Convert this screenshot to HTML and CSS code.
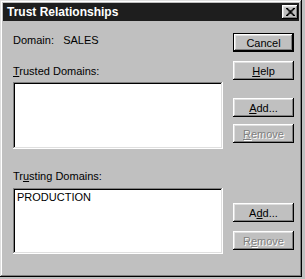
FILE: index.html
```html
<!DOCTYPE html>
<html lang="en">
<head>
    <meta charset="UTF-8">
    <link rel="stylesheet" href="styles.css">
</head>
<body>
    <div class="window">
        <div class="title-bar">
            <span class="title">Trust Relationships</span>
            <button class="close-btn" aria-label="Close">
                <svg width="9" height="8" viewBox="0 0 8 7" preserveAspectRatio="none">
                    <path d="M0 0h2v1h1v1h2v-1h1v-1h2v1h-1v1h-1v1h-1v1h1v1h1v1h1v1h-2v-1h-1v-1h-2v1h-1v1h-2v-1h1v-1h1v-1h1v-1h-1v-1h-1v-1h-1z" fill="#000"/>
                </svg>
            </button>
        </div>
        <div class="dialog-body">
            <div class="left-col">
                <div class="domain">Domain:&nbsp;&nbsp;&nbsp;SALES</div>
                <div class="label trusted-label"><u>T</u>rusted Domains:</div>
                <div class="listbox"></div>
                <div class="label trusting-label">Tr<u>u</u>sting Domains:</div>
                <div class="listbox">
                    <div class="list-item">PRODUCTION</div>
                </div>
            </div>
            <div class="right-col">
                <button class="btn default">Cancel</button>
                <button class="btn help"><u>H</u>elp</button>
                <button class="btn add-1"><u>A</u>dd...</button>
                <button class="btn remove-1" disabled><u>R</u>emove</button>
                <button class="btn add-2">A<u>d</u>d...</button>
                <button class="btn remove-2" disabled>R<u>e</u>move</button>
            </div>
        </div>
    </div>
</body>
</html>
```

FILE: styles.css
```css
body {
    margin: 0;
    background-color: #c0c0c0;
    font-family: 'Liberation Sans', Arial, sans-serif;
    font-size: 11px;
    color: #000;
}

.window {
    box-sizing: border-box;
    width: 302px;
    height: 277px;
    padding: 3px;
    background-color: #c0c0c0;
    box-shadow: inset -1px -1px #000, inset 1px 1px #dfdfdf,
                inset -2px -2px #808080, inset 2px 2px #fff;
}

.title-bar {
    display: flex;
    align-items: center;
    justify-content: space-between;
    height: 18px;
    padding: 0 1px 0 4px;
    background-color: #1e1e1e;
}

.title {
    color: #fff;
    font-weight: bold;
    font-size: 12px;
}

.close-btn {
    display: flex;
    align-items: center;
    justify-content: center;
    box-sizing: border-box;
    width: 16px;
    height: 14px;
    padding: 0;
    border: none;
    background-color: #c0c0c0;
    box-shadow: inset -1px -1px #000, inset 1px 1px #fff,
                inset -2px -2px #808080, inset 2px 2px #dfdfdf;
}

.dialog-body {
    display: flex;
    gap: 10px;
    padding-left: 10px;
}

.left-col {
    display: flex;
    flex-direction: column;
    width: 210px;
}

.domain {
    margin-top: 13px;
    line-height: 13px;
}

.label {
    line-height: 13px;
}

.trusted-label {
    margin-top: 18px;
}

.trusting-label {
    margin-top: 21px;
}

.listbox {
    box-sizing: border-box;
    height: 67px;
    margin-top: 4px;
    padding: 3px 4px;
    background-color: #fff;
    box-shadow: inset -1px -1px #fff, inset 1px 1px #808080,
                inset -2px -2px #dfdfdf, inset 2px 2px #000;
}

.trusting-label + .listbox {
    height: 66px;
    margin-top: 5px;
}

.list-item {
    line-height: 13px;
}

.right-col {
    display: flex;
    flex-direction: column;
}

.btn {
    box-sizing: border-box;
    width: 61px;
    height: 19px;
    padding: 0;
    border: none;
    font-family: 'Liberation Sans', Arial, sans-serif;
    font-size: 11px;
    color: #000;
    background-color: #c0c0c0;
    box-shadow: inset -1px -1px #000, inset 1px 1px #fff,
                inset -2px -2px #808080, inset 2px 2px #dfdfdf;
}

.btn.default {
    margin-top: 12px;
    box-shadow: inset -1px -1px #000, inset 1px 1px #000,
                inset -2px -2px #000, inset 2px 2px #fff,
                inset -3px -3px #808080, inset 3px 3px #dfdfdf;
}

.btn:disabled {
    color: #808080;
    text-shadow: 1px 1px 0 #fff;
}

.help {
    margin-top: 9px;
}

.add-1 {
    margin-top: 18px;
}

.remove-1 {
    margin-top: 7px;
}

.add-2 {
    margin-top: 60px;
}

.remove-2 {
    margin-top: 9px;
}
```
